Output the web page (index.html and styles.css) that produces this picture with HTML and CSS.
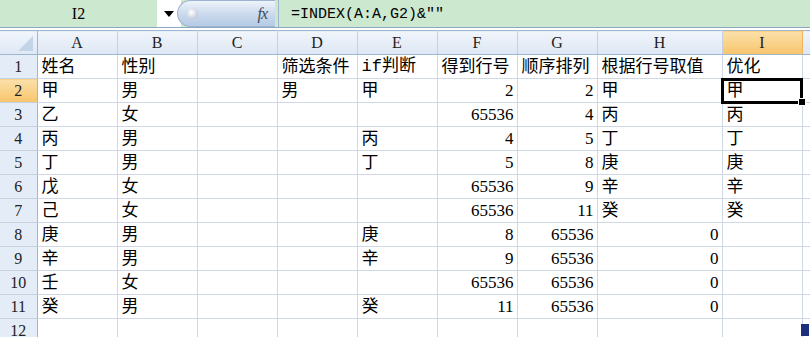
FILE: index.html
```html
<!DOCTYPE html>
<html>
<head>
    <link rel="stylesheet" href="styles.css">
</head>
<body>
    <div class="formula-bar">
        <div class="name-box">I2</div>
        <div class="name-drop">
            <svg width="10" height="6" viewBox="0 0 10 6"><path d="M0 0H10L5 6Z" fill="#000"/></svg>
        </div>
        <div class="fx-button">
            <span class="fx-knob"></span>
            <span class="fx-label">fx</span>
        </div>
        <div class="formula-input">=INDEX(A:A,G2)&amp;""</div>
    </div>

    <table class="sheet">
        <colgroup>
            <col class="col-rowhead">
            <col class="col-std"><col class="col-std"><col class="col-std"><col class="col-std">
            <col class="col-std"><col class="col-std"><col class="col-std">
            <col class="col-wide"><col class="col-std"><col class="col-rest">
        </colgroup>
        <thead>
            <tr>
                <th class="corner"><span class="corner-tri"></span></th>
                <th>A</th><th>B</th><th>C</th><th>D</th><th>E</th><th>F</th><th>G</th><th>H</th>
                <th class="active">I</th><th></th>
            </tr>
        </thead>
        <tbody>
            <tr><th>1</th><td>姓名</td><td>性别</td><td></td><td>筛选条件</td><td class="mix">if判断</td><td>得到行号</td><td>顺序排列</td><td>根据行号取值</td><td>优化</td><td></td></tr>
            <tr><th class="active">2</th><td>甲</td><td>男</td><td></td><td>男</td><td>甲</td><td class="num">2</td><td class="num">2</td><td>甲</td><td class="selected">甲<span class="fill-handle"></span></td><td></td></tr>
            <tr><th>3</th><td>乙</td><td>女</td><td></td><td></td><td></td><td class="num">65536</td><td class="num">4</td><td>丙</td><td>丙</td><td></td></tr>
            <tr><th>4</th><td>丙</td><td>男</td><td></td><td></td><td>丙</td><td class="num">4</td><td class="num">5</td><td>丁</td><td>丁</td><td></td></tr>
            <tr><th>5</th><td>丁</td><td>男</td><td></td><td></td><td>丁</td><td class="num">5</td><td class="num">8</td><td>庚</td><td>庚</td><td></td></tr>
            <tr><th>6</th><td>戊</td><td>女</td><td></td><td></td><td></td><td class="num">65536</td><td class="num">9</td><td>辛</td><td>辛</td><td></td></tr>
            <tr><th>7</th><td>己</td><td>女</td><td></td><td></td><td></td><td class="num">65536</td><td class="num">11</td><td>癸</td><td>癸</td><td></td></tr>
            <tr><th>8</th><td>庚</td><td>男</td><td></td><td></td><td>庚</td><td class="num">8</td><td class="num">65536</td><td class="num">0</td><td></td><td></td></tr>
            <tr><th>9</th><td>辛</td><td>男</td><td></td><td></td><td>辛</td><td class="num">9</td><td class="num">65536</td><td class="num">0</td><td></td><td></td></tr>
            <tr><th>10</th><td>壬</td><td>女</td><td></td><td></td><td></td><td class="num">65536</td><td class="num">65536</td><td class="num">0</td><td></td><td></td></tr>
            <tr><th>11</th><td>癸</td><td>男</td><td></td><td></td><td>癸</td><td class="num">11</td><td class="num">65536</td><td class="num">0</td><td></td><td></td></tr>
            <tr><th>12</th><td></td><td></td><td></td><td></td><td></td><td></td><td></td><td></td><td></td><td><span class="split-box"></span></td></tr>
        </tbody>
    </table>
</body>
</html>
```

FILE: styles.css
```css
html, body {
    margin: 0;
    padding: 0;
    background: #fff;
    overflow: hidden;
}
body {
    width: 810px;
    height: 337px;
    font-family: "Liberation Serif", "Noto Sans CJK SC", serif;
}
.formula-bar {
    display: flex;
    height: 27px;
    background: #cce8cf;
    border-bottom: 1px solid #8ea6bf;
}
.name-box {
    width: 157px;
    text-align: center;
    font-size: 16px;
    line-height: 27px;
    color: #000;
}
.name-drop {
    width: 24px;
    background: #fff;
    display: flex;
    align-items: center;
    justify-content: center;
}
.fx-button {
    position: relative;
    width: 98px;
    margin-left: -4px;
    border-radius: 14px 0 0 14px;
    background: linear-gradient(#eef3fa, #c9d8ec 55%, #b7cbe5);
    border: 1px solid #9db3cf;
    border-right: none;
    box-sizing: border-box;
}
.fx-knob {
    position: absolute;
    left: 9px;
    top: 7px;
    width: 11px;
    height: 11px;
    border-radius: 50%;
    background: radial-gradient(circle at 40% 40%, #ffffff, #c4cfdc 70%, #9aa9bb);
}
.fx-label {
    position: absolute;
    right: 8px;
    top: 4px;
    font-family: "Liberation Serif", serif;
    font-style: italic;
    font-size: 16px;
    color: #3a4a5e;
    letter-spacing: -1px;
}
.formula-input {
    flex: 1;
    margin-left: 3px;
    padding-left: 12px;
    border-left: 1px solid #9db3cf;
    font-family: "Liberation Mono", monospace;
    font-size: 15px;
    line-height: 29px;
    color: #000;
}
.sheet {
    margin-top: 2px;
    border-collapse: collapse;
    table-layout: fixed;
    width: 840px;
}
.col-rowhead { width: 37px; }
.col-std { width: 80px; }
.col-wide { width: 125px; }
.col-rest { width: 38px; }
.sheet thead tr { height: 24px; }
.sheet tbody tr { height: 24px; }
.sheet th,
.sheet td {
    line-height: 20px;
    padding-top: 0;
    padding-bottom: 0;
}
.sheet thead th {
    padding: 0;
    font-weight: normal;
    font-size: 16px;
    color: #222;
    background: linear-gradient(#f1f5fb, #dde7f4);
    border-top: 1px solid #9eb6ce;
    border-right: 1px solid #c5d1e0;
    border-bottom: 1px solid #9eb6ce;
}
.sheet thead th.active {
    background: linear-gradient(#fbe0a9, #f7c56c);
    border-right-color: #f2b45a;
}
.sheet thead th.corner {
    position: relative;
    border-right: 1px solid #9eb6ce;
}
.corner-tri {
    position: absolute;
    right: 4px;
    bottom: 3px;
    width: 0;
    height: 0;
    border-left: 15px solid transparent;
    border-bottom: 15px solid #c3d3e8;
}
.sheet tbody th {
    padding: 0;
    font-weight: normal;
    font-size: 16px;
    color: #222;
    background: #e4ecf7;
    border-right: 1px solid #9eb6ce;
    border-bottom: 1px solid #c5d1e0;
    text-align: center;
}
.sheet tbody th.active {
    background: linear-gradient(#fbe0a9, #f7c56c);
}
.sheet td {
    padding-left: 4px;
    padding-right: 3px;
    font-size: 17px;
    color: #000;
    border-right: 1px solid #d0d7e5;
    border-bottom: 1px solid #d0d7e5;
    white-space: nowrap;
    overflow: visible;
    vertical-align: middle;
}
.sheet td.num {
    text-align: right;
}
.sheet td.mix {
    font-family: "Liberation Mono", "Noto Sans CJK SC", monospace;
}
.sheet td.selected {
    position: relative;
    outline: 3px solid #000;
    outline-offset: -2px;
}
.fill-handle {
    position: absolute;
    right: -4px;
    bottom: -4px;
    width: 6px;
    height: 6px;
    background: #000;
    border: 1px solid #fff;
}
.split-box {
    display: inline-block;
    width: 8px;
    height: 12px;
    margin-left: -6px;
    background: #1d2f7a;
}
```
